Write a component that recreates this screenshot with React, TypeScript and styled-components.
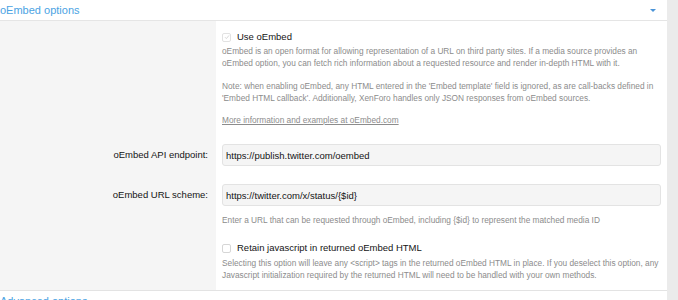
import React from "react";
import styled, { createGlobalStyle } from "styled-components";

const GlobalStyle = createGlobalStyle`
  html, body {
    margin: 0;
    padding: 0;
    background: #ebebeb;
    font-family: "Liberation Sans", Arial, sans-serif;
    overflow: hidden;
  }
`;

const Page = styled.div`
  width: 667px;
  background: #fff;
`;

const SectionHeader = styled.div`
  height: 20px;
  display: flex;
  align-items: center;
  justify-content: space-between;
  padding-right: 11px;
  border-bottom: 1px solid #e5e5e5;
  font-size: 11px;
  color: #4ba3e3;
`;

const Caret = styled.span`
  width: 0;
  height: 0;
  border-left: 3px solid transparent;
  border-right: 3px solid transparent;
  border-top: 3px solid #4a94d8;
  margin-top: 1px;
`;

const FormBody = styled.div`
  border-bottom: 1px solid #e3e3e3;
`;

interface RowProps {
  $top: number;
  $bottom: number;
}

const Row = styled.div`
  display: grid;
  grid-template-columns: 216px 1fr;
`;

const LabelCell = styled.div<RowProps>`
  background: #f5f5f5;
  padding: ${({ $top }) => $top}px 8px ${({ $bottom }) => $bottom}px 0;
  text-align: right;
  font-size: 9.5px;
  color: #141414;
  line-height: 22px;
`;

const ValueCell = styled.div<RowProps>`
  padding: ${({ $top }) => $top}px 6px ${({ $bottom }) => $bottom}px 6px;
`;

const CheckRow = styled.label`
  display: flex;
  align-items: center;
  gap: 6px;
  font-size: 9.5px;
  line-height: 14px;
  color: #141414;
`;

const Box = styled.span<{ $checked?: boolean }>`
  width: 7px;
  height: 7px;
  border: 1px solid ${({ $checked }) => ($checked ? "#e2e2e2" : "#d6d6d6")};
  border-radius: 2px;
  background: #fff;
  display: flex;
  align-items: center;
  justify-content: center;
`;

const Explain = styled.div<{ $gap?: number }>`
  margin-top: ${({ $gap }) => $gap ?? 0}px;
  font-size: 8.3px;
  line-height: 12px;
  color: #8c8c8c;
`;

const MoreLink = styled.a`
  color: #8c8c8c;
  text-decoration: underline;
`;

const TextInput = styled.input`
  display: block;
  box-sizing: border-box;
  width: 100%;
  height: 22px;
  padding: 0 3px;
  border: 1px solid #e3e3e3;
  border-radius: 3px;
  background: #f5f5f5;
  font-family: "Liberation Sans", Arial, sans-serif;
  font-size: 9.5px;
  color: #141414;
  outline: none;
`;

const Check = () => (
  <svg width="6" height="6" viewBox="0 0 6 6">
    <path d="M1 3.2 L2.4 4.6 L5 1.4" fill="none" stroke="#d8d8d8" strokeWidth="1" />
  </svg>
);

const App: React.FC = () => {
  return (
    <>
      <GlobalStyle />
      <Page>
        <SectionHeader>
          <span>oEmbed options</span>
          <Caret />
        </SectionHeader>
        <FormBody>
          <Row>
            <LabelCell $top={9} $bottom={9} />
            <ValueCell $top={9} $bottom={9}>
              <CheckRow>
                <Box $checked>
                  <Check />
                </Box>
                Use oEmbed
              </CheckRow>
              <Explain $gap={1}>
                oEmbed is an open format for allowing representation of a URL on third party sites. If a media source
                provides an oEmbed option, you can fetch rich information about a requested resource and render
                in-depth HTML with it.
              </Explain>
              <Explain $gap={11}>
                Note: when enabling oEmbed, any HTML entered in the 'Embed template' field is ignored, as are
                call-backs defined in 'Embed HTML callback'. Additionally, XenForo handles only JSON responses from
                oEmbed sources.
              </Explain>
              <Explain $gap={10}>
                <MoreLink>More information and examples at oEmbed.com</MoreLink>
              </Explain>
            </ValueCell>
          </Row>
          <Row>
            <LabelCell $top={9} $bottom={9}>oEmbed API endpoint:</LabelCell>
            <ValueCell $top={9} $bottom={9}>
              <TextInput readOnly value="https://publish.twitter.com/oembed" />
            </ValueCell>
          </Row>
          <Row>
            <LabelCell $top={9} $bottom={9}>oEmbed URL scheme:</LabelCell>
            <ValueCell $top={9} $bottom={9}>
              <TextInput readOnly value="https://twitter.com/x/status/{$id}" />
              <Explain $gap={8}>
                Enter a URL that can be requested through oEmbed, including {"{$id}"} to represent the matched media ID
              </Explain>
            </ValueCell>
          </Row>
          <Row>
            <LabelCell $top={6} $bottom={9} />
            <ValueCell $top={6} $bottom={9}>
              <CheckRow>
                <Box />
                Retain javascript in returned oEmbed HTML
              </CheckRow>
              <Explain $gap={2}>
                Selecting this option will leave any &lt;script&gt; tags in the returned oEmbed HTML in place. If you
                deselect this option, any Javascript initialization required by the returned HTML will need to be
                handled with your own methods.
              </Explain>
            </ValueCell>
          </Row>
        </FormBody>
        <SectionHeader>
          <span>Advanced options</span>
          <Caret />
        </SectionHeader>
      </Page>
    </>
  );
};

export default App;
